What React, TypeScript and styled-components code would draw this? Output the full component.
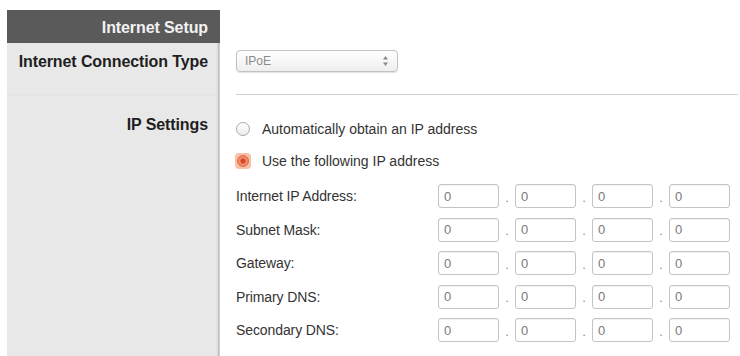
import React from "react";
import styled, { createGlobalStyle } from "styled-components";

const Global = createGlobalStyle`
  html, body { margin: 0; padding: 0; background: #fff; }
  body { font-family: "Liberation Sans", Arial, sans-serif; }
  #root { min-height: 100vh; display: flex; flex-direction: column; }
`;

const Page = styled.div`
  flex: 1;
  display: flex;
  flex-direction: column;
  padding-top: 10px;
`;

const Row = styled.div<{ $grow?: boolean }>`
  display: grid;
  grid-template-columns: 7px 213px 1fr;
  flex: ${(p) => (p.$grow ? 1 : "none")};
`;

const Spacer = styled.div``;

const SideCell = styled.div<{ $dark?: boolean; $pt: number }>`
  background: ${(p) => (p.$dark ? "#5a5a5a" : "#e8e8e8")};
  color: ${(p) => (p.$dark ? "#f2f2f2" : "#1e1e1e")};
  font-weight: bold;
  font-size: 16px;
  line-height: 18px;
  letter-spacing: -0.1px;
  text-align: right;
  padding: ${(p) => p.$pt}px 11px 0 0;
  box-shadow: ${(p) => (p.$dark ? "none" : "inset -2px 0 2px -1px #b5b5b5")};
  border-right: 1px solid ${(p) => (p.$dark ? "#5a5a5a" : "#cfcfcf")};
`;

const HeaderCell = styled(SideCell)`
  height: 33px;
  box-sizing: border-box;
`;

const Main = styled.div`
  padding: 0 2px 0 16px;
`;

const TypeBlock = styled.div`
  padding-top: 7px;
  height: 44px;
  border-bottom: 1px solid #cfcfcf;
`;

const Select = styled.div`
  width: 162px;
  height: 22px;
  box-sizing: border-box;
  border: 1px solid #c2c2c2;
  border-radius: 4px;
  background: linear-gradient(#ffffff, #efefef);
  box-shadow: 0 1px 1px rgba(0, 0, 0, 0.12);
  display: flex;
  align-items: center;
  justify-content: space-between;
  padding: 0 8px 0 8px;
  color: #8a8a8a;
  font-size: 12px;
`;

const Arrows = styled.svg`
  width: 7px;
  height: 12px;
`;

const RadioList = styled.div`
  padding-top: 26px;
  display: flex;
  flex-direction: column;
  gap: 16px;
`;

const RadioRow = styled.label`
  display: flex;
  align-items: center;
  gap: 11px;
  font-size: 14px;
  color: #333;
  height: 16px;
`;

const RadioBox = styled.span<{ $on?: boolean }>`
  width: 16px;
  height: 16px;
  border-radius: 4px;
  margin-left: -1px;
  background: ${(p) => (p.$on ? "#f7c1a6" : "transparent")};
  display: flex;
  align-items: center;
  justify-content: center;
`;

const RadioDot = styled.span<{ $on?: boolean }>`
  width: ${(p) => (p.$on ? 12 : 14)}px;
  height: ${(p) => (p.$on ? 12 : 14)}px;
  box-sizing: border-box;
  border-radius: 50%;
  border: 1px solid ${(p) => (p.$on ? "#e26a45" : "#a9a9a9")};
  background: ${(p) =>
    p.$on
      ? "radial-gradient(circle, #d9472a 0 2px, #ee8a68 3px 6px)"
      : "linear-gradient(#ffffff, #ececec)"};
`;

const Fields = styled.div`
  margin-top: 15px;
  display: grid;
  grid-template-columns: 202px repeat(3, 61px 16px) 61px;
  row-gap: 9.5px;
  align-items: center;
`;

const FieldLabel = styled.div`
  font-size: 14px;
  color: #333;
  letter-spacing: -0.1px;
`;

const Octet = styled.div`
  height: 24px;
  box-sizing: border-box;
  border: 1px solid #c4c4c4;
  border-radius: 3px;
  box-shadow: inset 0 1px 1px rgba(0, 0, 0, 0.06);
  font-size: 13px;
  color: #7a7a7a;
  display: flex;
  align-items: center;
  padding-left: 5px;
`;

const Dot = styled.div`
  text-align: center;
  color: #888;
  font-size: 13px;
  padding-top: 2px;
`;

const fields = [
  "Internet IP Address:",
  "Subnet Mask:",
  "Gateway:",
  "Primary DNS:",
  "Secondary DNS:",
];

export default function App() {
  return (
    <>
      <Global />
      <Page>
        <Row>
          <Spacer />
          <HeaderCell $dark $pt={9}>Internet Setup</HeaderCell>
          <Spacer />
        </Row>
        <Row>
          <Spacer />
          <SideCell $pt={10}>Internet Connection Type</SideCell>
          <Main>
            <TypeBlock>
              <Select>
                <span>IPoE</span>
                <Arrows viewBox="0 0 7 12">
                  <path d="M3.5 1 L6 4.5 H1 Z" fill="#888" />
                  <path d="M3.5 11 L6 7.5 H1 Z" fill="#888" />
                </Arrows>
              </Select>
            </TypeBlock>
          </Main>
        </Row>
        <Row $grow>
          <Spacer />
          <SideCell $pt={21}>IP Settings</SideCell>
          <Main>
            <RadioList>
              <RadioRow>
                <RadioBox>
                  <RadioDot />
                </RadioBox>
                Automatically obtain an IP address
              </RadioRow>
              <RadioRow>
                <RadioBox $on>
                  <RadioDot $on />
                </RadioBox>
                Use the following IP address
              </RadioRow>
            </RadioList>
            <Fields>
              {fields.map((f) => (
                <React.Fragment key={f}>
                  <FieldLabel>{f}</FieldLabel>
                  <Octet>0</Octet>
                  <Dot>.</Dot>
                  <Octet>0</Octet>
                  <Dot>.</Dot>
                  <Octet>0</Octet>
                  <Dot>.</Dot>
                  <Octet>0</Octet>
                </React.Fragment>
              ))}
            </Fields>
          </Main>
        </Row>
      </Page>
    </>
  );
}
